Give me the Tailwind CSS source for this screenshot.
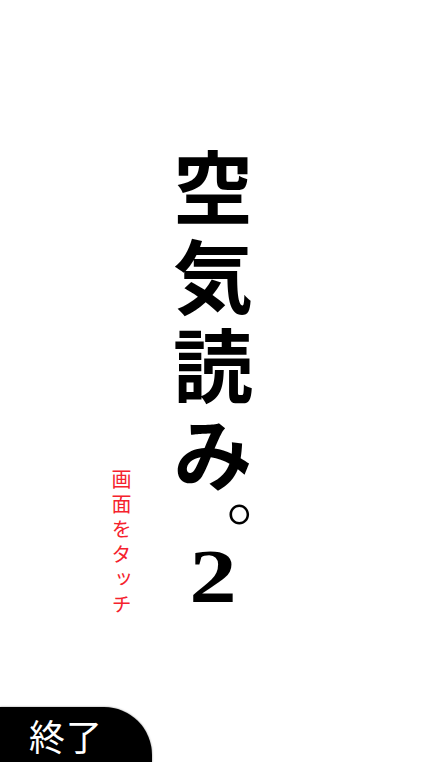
<!DOCTYPE html>
<html lang="ja">
<head>
<meta charset="utf-8">
<script src="https://cdn.jsdelivr.net/npm/@tailwindcss/browser@4"></script>
</head>
<body class="bg-white">
<div class="w-[428px] h-[762px] overflow-hidden flex flex-col bg-white font-['Noto_Sans_CJK_JP','Noto_Sans_CJK_SC',sans-serif]">
  <main class="flex-1 flex items-start pl-[109px] pt-[148px]">
    <p class="[writing-mode:vertical-rl] text-[20px] tracking-[5px] leading-[24px] text-[#f5222d] mt-[321px] w-[24px] h-[156px]">画面をタッチ</p>
    <h1 class="ml-[38px] w-[84px] flex flex-col items-center text-black font-bold text-[80px] leading-[84px]">
      <span class="[writing-mode:vertical-rl] tracking-[9px] h-[352px] whitespace-nowrap">空気読み</span>
      <span class="[writing-mode:vertical-rl] relative left-[5px] h-[47px] w-[84px] text-[68px] leading-[84px] font-light whitespace-nowrap">。</span>
      <span class="font-['Liberation_Serif',serif] font-bold text-[76px] leading-[58px] scale-x-125">2</span>
    </h1>
  </main>
  <footer class="w-[152px] h-[55px] bg-black rounded-tr-[48px] shadow-[0_0_2px_rgba(0,0,0,0.5)] flex items-center pl-[29px] text-white text-[36px] leading-none">
    <span class="tracking-[1px]">終了</span>
  </footer>
</div>
</body>
</html>
